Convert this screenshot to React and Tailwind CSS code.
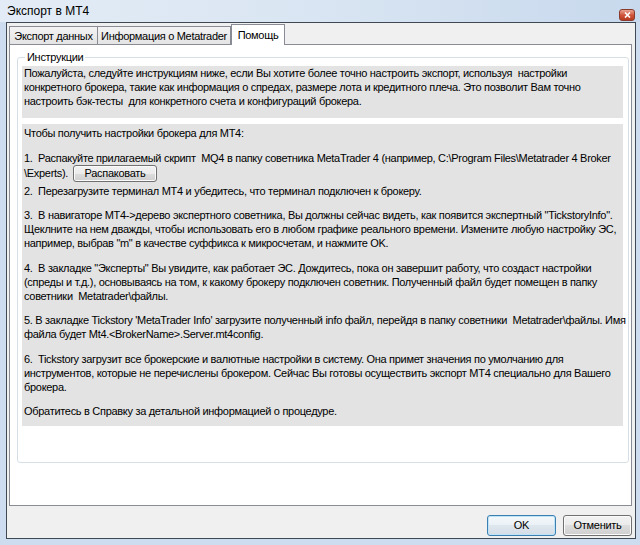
import React from 'react';

const INTRO = [
  'Пожалуйста, следуйте инструкциям ниже, если Вы хотите более точно настроить экспорт, используя  настройки',
  'конкретного брокера, такие как информация о спредах, размере лота и кредитного плеча. Это позволит Вам точно',
  'настроить бэк-тесты  для конкретного счета и конфигураций брокера.',
];

const STEP_3 = [
  '3.  В навигаторе МТ4->дерево экспертного советника, Вы должны сейчас видеть, как появится экспертный "TickstoryInfo".',
  'Щеклните на нем дважды, чтобы использовать его в любом графике реального времени. Измените любую настройку ЭС,',
  'например, выбрав "m" в качестве суффикса к микросчетам, и нажмите OK.',
];

const STEP_4 = [
  '4.  В закладке "Эксперты" Вы увидите, как работает ЭС. Дождитесь, пока он завершит работу, что создаст настройки',
  '(спреды и т.д.), основываясь на том, к какому брокеру подключен советник. Полученный файл будет помещен в папку',
  'советники  Metatrader\\файлы.',
];

const STEP_5 = [
  "5. В закладке Tickstory 'MetaTrader Info' загрузите полученный info файл, перейдя в папку советники  Metatrader\\файлы. Имя",
  'файла будет Mt4.<BrokerName>.Server.mt4config.',
];

const STEP_6 = [
  '6.  Tickstory загрузит все брокерские и валютные настройки в систему. Она примет значения по умолчанию для',
  'инструментов, которые не перечислены брокером. Сейчас Вы готовы осуществить экспорт МТ4 специально для Вашего',
  'брокера.',
];

const Para = ({ lines }) => (
  <div>
    {lines.map((line, i) => (
      <div key={i} className="h-[14px] whitespace-pre">{line}</div>
    ))}
  </div>
);

const WinButton = ({ children, primary, className = '' }) => (
  <button
    className={`flex items-center justify-center rounded-[3px] border text-[11px] leading-none text-black ${
      primary
        ? 'border-[#3c7fb1] bg-[linear-gradient(to_bottom,#f4f8fb_0%,#eaf1f6_50%,#dfe7ee_50%,#d3dde6_100%)] shadow-[inset_0_0_0_1px_#bfe4f8]'
        : 'border-[#707070] bg-[linear-gradient(to_bottom,#f2f2f2_0%,#ebebeb_50%,#dddddd_50%,#cfcfcf_100%)] shadow-[inset_0_0_0_1px_#fbfbfb]'
    } ${className}`}
  >
    {children}
  </button>
);

const Tab = ({ label, active, width }) =>
  active ? (
    <div className={`${width} -mb-px flex h-[21px] items-center justify-center whitespace-nowrap border border-b-0 border-[#898c95] bg-white`}>
      {label}
    </div>
  ) : (
    <div className={`${width} flex h-[18px] items-center justify-center whitespace-nowrap border border-b-0 border-r-0 border-[#898c95] bg-gradient-to-b from-[#f3f3f3] to-[#e4e4e4]`}>
      {label}
    </div>
  );

export default function App() {
  return (
    <div className="flex h-[545px] w-[640px] flex-col bg-[#cddcee] font-['Liberation_Sans',Arial,sans-serif] text-[11px] leading-[14px] tracking-[-0.3px] text-black">
      {/* caption */}
      <div className="flex h-[22px] flex-none items-start justify-between bg-gradient-to-r from-[#e3ecf6] via-[#d9e5f2] to-[#c8d9ed] pl-[7px] pr-[5px]">
        <span className="mt-[4px] text-[12px] leading-[15px] tracking-normal">Экспорт в МТ4</span>
        <div className="mt-[9px] flex h-[12px] w-[16px] items-center justify-center rounded-[3px] border border-[#8a3a2a] bg-gradient-to-b from-[#e8a493] via-[#d0553b] to-[#b63a20]">
          <svg width="7" height="6" viewBox="0 0 7 6">
            <path d="M1 0.5 L6 5.5 M6 0.5 L1 5.5" stroke="white" strokeWidth="1.6" />
          </svg>
        </div>
      </div>

      {/* client area */}
      <div className="ml-[6px] mr-[4px] flex h-[517px] flex-none flex-col border border-[#3f4954] bg-[#f0f0f0]">
        <div className="ml-[2px] mr-[3px] mt-[1px] flex flex-col">
          <div className="relative z-10 flex h-[20px] items-end">
            <Tab label="Экспорт данных" width="w-[88px]" />
            <div className="border-r border-[#898c95]">
              <Tab label="Информация о Metatrader" width="w-[133px]" />
            </div>
            <Tab label="Помощь" width="w-[54px]" active />
          </div>

          <div className="h-[462px] border border-[#898c95] bg-white pl-[7px] pt-[5px]">
            <fieldset className="w-[612px] rounded-[3px] border border-[#d5dfe5] pb-[36px]">
              <legend className="ml-[7px] px-[2px] leading-[14px]">Инструкции</legend>

              <div className="ml-[4px] mt-[2px] h-[52px] w-[601px] bg-[#e3e3e3] pl-[2px]">
                <Para lines={INTRO} />
              </div>

              <div className="ml-[4px] mt-[6px] flex h-[302px] w-[601px] flex-col gap-[10.5px] bg-[#e3e3e3] pl-[2px] pt-[2px]">
                <Para lines={['Чтобы получить настройки брокера для МТ4:']} />
                <div>
                  <div className="h-[14px] whitespace-pre">
                    1.  Распакуйте прилагаемый скрипт  MQ4 в папку советника MetaTrader 4 (например, C:\Program Files\Metatrader 4 Broker
                  </div>
                  <div className="flex h-[19px] items-start">
                    <span className="mt-[1px] w-[49px]">\Experts).</span>
                    <WinButton className="h-[17px] w-[84px]">Распаковать</WinButton>
                  </div>
                  <div className="h-[14px] whitespace-pre">
                    2.  Перезагрузите терминал МТ4 и убедитесь, что терминал подключен к брокеру.
                  </div>
                </div>
                <Para lines={STEP_3} />
                <Para lines={STEP_4} />
                <Para lines={STEP_5} />
                <Para lines={STEP_6} />
                <Para lines={['Обратитесь в Справку за детальной информацией о процедуре.']} />
              </div>
            </fieldset>
          </div>
        </div>

        <div className="mt-[9px] flex justify-end gap-[7px] pr-[3px]">
          <WinButton primary className="h-[21px] w-[69px]">OK</WinButton>
          <WinButton className="h-[21px] w-[69px]">Отменить</WinButton>
        </div>
      </div>
    </div>
  );
}
